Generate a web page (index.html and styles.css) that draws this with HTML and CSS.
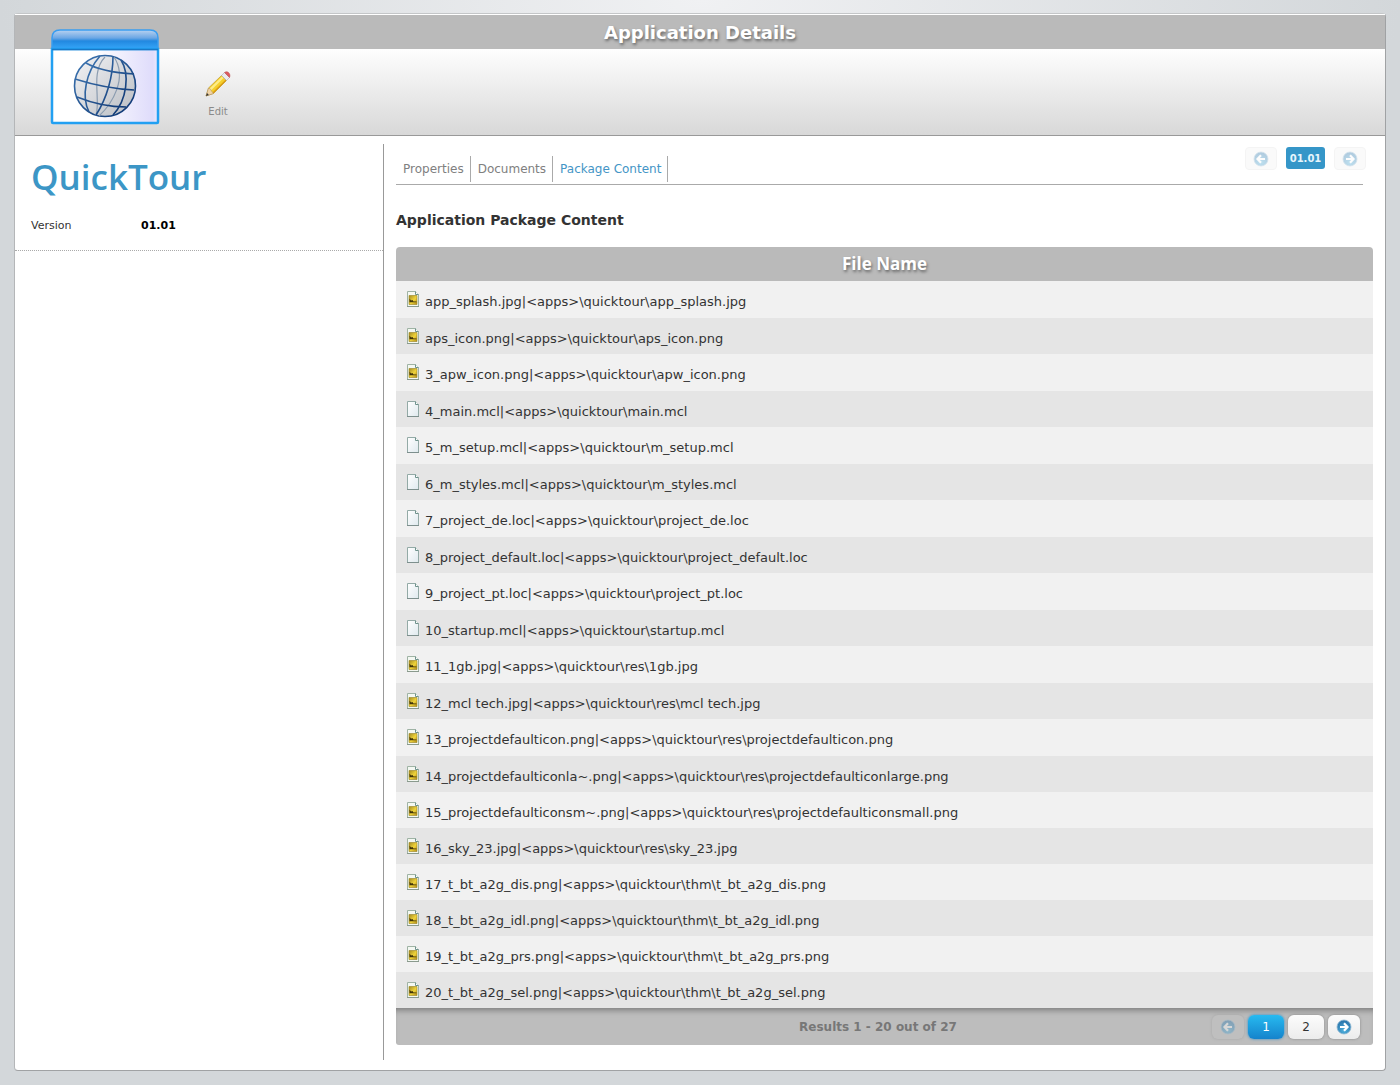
FILE: index.html
```html
<!DOCTYPE html>
<html lang="en">
<head>
    <meta charset="UTF-8">
    <meta name="viewport" content="width=device-width, initial-scale=1.0">
    <title>Application Details</title>
    <link rel="stylesheet" href="styles.css">
</head>
<body>
    <!-- shared icons -->
    <svg class="sprite" aria-hidden="true">
        <defs>
            <linearGradient id="sheet" x1="0" y1="0" x2="1" y2="1">
                <stop offset="0" stop-color="#ffffff"/>
                <stop offset="1" stop-color="#dfe9ee"/>
            </linearGradient>
            <linearGradient id="gold" x1="0" y1="0" x2="1" y2="1">
                <stop offset="0" stop-color="#a08a24"/>
                <stop offset="0.55" stop-color="#f0d43a"/>
                <stop offset="1" stop-color="#b08a14"/>
            </linearGradient>
            <radialGradient id="disc" cx="0.5" cy="0.75" r="0.7">
                <stop offset="0" stop-color="#4fb0dc"/>
                <stop offset="1" stop-color="#2a74ab"/>
            </radialGradient>
        </defs>
        <symbol id="file" viewBox="0 0 16 16">
            <path d="M2.5 0.5h8l3 3v12h-11z" fill="url(#sheet)" stroke="#93aaa6"/>
            <path d="M10.5 0.5v3h3" fill="#ffffff" stroke="#6f928c"/>
            <path d="M2 15.5h12" stroke="#7d8f8d"/>
        </symbol>
        <symbol id="image" viewBox="0 0 16 16">
            <path d="M2.5 0.5h8l3 3v12h-11z" fill="#f4f8f2" stroke="#9fb3a4"/>
            <path d="M10.5 0.5v3h3" fill="#ffffff" stroke="#6f928c"/>
            <path d="M4 4.500h8v9h-8z" fill="url(#gold)" stroke="#9a8320" stroke-width="0.6"/>
            <path d="M4.500 7.500l1.500 2 1.500-.5 1 1.500h3v.8h-7z" fill="#3e3208"/>
            <path d="M2 15.5h12" stroke="#8a9a8d"/>
        </symbol>
        <symbol id="left" viewBox="0 0 16 16">
            <circle cx="8" cy="8" r="7" fill="url(#disc)" stroke="#8fb9d3" stroke-width="0.8"/>
            <path d="M12 8H5M8 4.300L4.500 8L8 11.700" fill="none" stroke="#fff" stroke-width="2.200"/>
        </symbol>
        <symbol id="right" viewBox="0 0 16 16">
            <circle cx="8" cy="8" r="7" fill="url(#disc)" stroke="#8fb9d3" stroke-width="0.8"/>
            <path d="M4 8h7M8 4.300L11.500 8L8 11.700" fill="none" stroke="#fff" stroke-width="2.200"/>
        </symbol>
    </svg>

    <div class="panel">
        <header class="panel-header">
            <h1>Application Details</h1>
            <div class="toolbar">
                <button type="button" class="tool">
                    <svg width="28" height="28" viewBox="0 0 28 28">
                        <path d="M2 26l2.500-8L17.500 5.500l5 5L9.500 23.500z" fill="#f5cf2c" stroke="#b58f25" stroke-width="0.6"/>
                        <path d="M5.300 18.800L18 6.500l1.600 1.600L7 20.500z" fill="#fdec86"/>
                        <path d="M8.500 22.500L21.500 9.700l.9.900L9.500 23.400z" fill="#d99a14"/>
                        <path d="M2 26l2.500-8 2 1.200.9 1.700 2.100 2.600z" fill="#f0d3a6" stroke="#a98a5e" stroke-width="0.5"/>
                        <path d="M2 26l1-2.900 1.900 1.900z" fill="#333"/>
                        <path d="M17.500 5.500l3-3 5 5-3 3z" fill="#eaeaef" stroke="#9c9ca5" stroke-width="0.5"/>
                        <path d="M20.500 2.500c1.500-1.200 3-1 4.200.2 1.200 1.200 1.700 3 .8 4.800z" fill="#dd5a5e" stroke="#b7484c" stroke-width="0.5"/>
                    </svg>
                    <span>Edit</span>
                </button>
            </div>
            <svg class="app-icon" width="110" height="98" viewBox="0 0 110 98" role="img" aria-label="Web application">
                <defs>
                    <linearGradient id="bar" x1="0" y1="0" x2="0" y2="1">
                        <stop offset="0" stop-color="#b9d2f1"/>
                        <stop offset="0.4" stop-color="#6ba6e4"/>
                        <stop offset="0.55" stop-color="#2288e0"/>
                        <stop offset="1" stop-color="#38aafc"/>
                    </linearGradient>
                    <linearGradient id="pane" x1="0" y1="0" x2="1" y2="0">
                        <stop offset="0.4" stop-color="#ffffff"/>
                        <stop offset="0.95" stop-color="#dfdcfb"/>
                        <stop offset="1" stop-color="#ebe9fd"/>
                    </linearGradient>
                    <linearGradient id="globe" x1="0" y1="0" x2="1" y2="1">
                        <stop offset="0" stop-color="#f3f4f6"/>
                        <stop offset="1" stop-color="#b9bcc2"/>
                    </linearGradient>
                    <linearGradient id="wire" x1="0" y1="0" x2="1" y2="1">
                        <stop offset="0" stop-color="#3f78b4"/>
                        <stop offset="1" stop-color="#0c3370"/>
                    </linearGradient>
                </defs>
                <path d="M2 22V10q0-8 8-8h90q8 0 8 8v12z" fill="url(#bar)" stroke="#3a9df0" stroke-width="1.500"/>
                <path d="M2 21h106v73q0 1-1 1H3q-1 0-1-1z" fill="url(#pane)" stroke="#22a0f2" stroke-width="2.500"/>
                <path d="M2 21.500h106" stroke="#1878c8" stroke-width="1.500"/>
                <g fill="none" stroke="url(#wire)" stroke-width="1.600">
                    <circle cx="55" cy="58" r="30.500" fill="url(#globe)"/>
                    <g stroke="#8b9cb0" stroke-width="1.200">
                        <path d="M55 29C40 44 51 72 46 87M64 29C78 50 62 76 49 88"/>
                    </g>
                    <path d="M63 28.500C63 48 57 70 46 87M50 28C36 44 31 68 39 84M71 32C80 46 77 72 63 87"/>
                    <path d="M36 35C48 42 67 45 84 46M25 51C44 57 64 61 84 62M27 69C42 75 59 79 76 79"/>
                </g>
            </svg>
        </header>

        <div class="columns">
            <aside class="summary">
                <h2>QuickTour</h2>
                <dl>
                    <dt>Version</dt>
                    <dd>01.01</dd>
                </dl>
            </aside>

            <main class="content">
                <div class="content-top">
                    <nav class="tabs">
                        <a href="#properties">Properties</a>
                        <a href="#documents">Documents</a>
                        <a href="#package" class="active">Package Content</a>
                    </nav>
                    <div class="versions">
                        <button type="button" class="step" disabled aria-label="Previous version"><svg width="16" height="16"><use href="#left"/></svg></button>
                        <button type="button" class="version">01.01</button>
                        <button type="button" class="step" disabled aria-label="Next version"><svg width="16" height="16"><use href="#right"/></svg></button>
                    </div>
                </div>

                <h3>Application Package Content</h3>

                <table class="files">
                    <thead>
                        <tr><th>File Name</th></tr>
                    </thead>
                    <tbody>
                        <tr><td><svg><use href="#image"/></svg>app_splash.jpg|&lt;apps&gt;\quicktour\app_splash.jpg</td></tr>
                        <tr><td><svg><use href="#image"/></svg>aps_icon.png|&lt;apps&gt;\quicktour\aps_icon.png</td></tr>
                        <tr><td><svg><use href="#image"/></svg>3_apw_icon.png|&lt;apps&gt;\quicktour\apw_icon.png</td></tr>
                        <tr><td><svg><use href="#file"/></svg>4_main.mcl|&lt;apps&gt;\quicktour\main.mcl</td></tr>
                        <tr><td><svg><use href="#file"/></svg>5_m_setup.mcl|&lt;apps&gt;\quicktour\m_setup.mcl</td></tr>
                        <tr><td><svg><use href="#file"/></svg>6_m_styles.mcl|&lt;apps&gt;\quicktour\m_styles.mcl</td></tr>
                        <tr><td><svg><use href="#file"/></svg>7_project_de.loc|&lt;apps&gt;\quicktour\project_de.loc</td></tr>
                        <tr><td><svg><use href="#file"/></svg>8_project_default.loc|&lt;apps&gt;\quicktour\project_default.loc</td></tr>
                        <tr><td><svg><use href="#file"/></svg>9_project_pt.loc|&lt;apps&gt;\quicktour\project_pt.loc</td></tr>
                        <tr><td><svg><use href="#file"/></svg>10_startup.mcl|&lt;apps&gt;\quicktour\startup.mcl</td></tr>
                        <tr><td><svg><use href="#image"/></svg>11_1gb.jpg|&lt;apps&gt;\quicktour\res\1gb.jpg</td></tr>
                        <tr><td><svg><use href="#image"/></svg>12_mcl tech.jpg|&lt;apps&gt;\quicktour\res\mcl tech.jpg</td></tr>
                        <tr><td><svg><use href="#image"/></svg>13_projectdefaulticon.png|&lt;apps&gt;\quicktour\res\projectdefaulticon.png</td></tr>
                        <tr><td><svg><use href="#image"/></svg>14_projectdefaulticonla~.png|&lt;apps&gt;\quicktour\res\projectdefaulticonlarge.png</td></tr>
                        <tr><td><svg><use href="#image"/></svg>15_projectdefaulticonsm~.png|&lt;apps&gt;\quicktour\res\projectdefaulticonsmall.png</td></tr>
                        <tr><td><svg><use href="#image"/></svg>16_sky_23.jpg|&lt;apps&gt;\quicktour\res\sky_23.jpg</td></tr>
                        <tr><td><svg><use href="#image"/></svg>17_t_bt_a2g_dis.png|&lt;apps&gt;\quicktour\thm\t_bt_a2g_dis.png</td></tr>
                        <tr><td><svg><use href="#image"/></svg>18_t_bt_a2g_idl.png|&lt;apps&gt;\quicktour\thm\t_bt_a2g_idl.png</td></tr>
                        <tr><td><svg><use href="#image"/></svg>19_t_bt_a2g_prs.png|&lt;apps&gt;\quicktour\thm\t_bt_a2g_prs.png</td></tr>
                        <tr><td><svg><use href="#image"/></svg>20_t_bt_a2g_sel.png|&lt;apps&gt;\quicktour\thm\t_bt_a2g_sel.png</td></tr>
                    </tbody>
                </table>

                <div class="table-footer">
                    <span class="results">Results 1 - 20 out of 27</span>
                    <div class="pager">
                        <button type="button" class="arrow" disabled aria-label="Previous page"><svg width="16" height="16"><use href="#left"/></svg></button>
                        <button type="button" class="current">1</button>
                        <button type="button">2</button>
                        <button type="button" class="arrow" aria-label="Next page"><svg width="16" height="16"><use href="#right"/></svg></button>
                    </div>
                </div>
            </main>
        </div>
    </div>
</body>
</html>
```
FILE: styles.css
```css
* {
    box-sizing: border-box;
}

body {
    margin: 0;
    padding: 13px 14px 14px;
    font-family: Verdana, "DejaVu Sans", sans-serif;
    font-size: 13px;
    color: #333;
    background: #d3d7da radial-gradient(ellipse 700px 300px at 50% 0, #f0f1f3 0%, #d3d7da 100%) no-repeat;
}

button {
    font-family: inherit;
    border: none;
    padding: 0;
    cursor: pointer;
}

.sprite {
    position: absolute;
    width: 0;
    height: 0;
}

.panel {
    background: #fff;
    border: 1px solid #a0a2a4;
    border-top-color: #c4c6c8;
    border-left-color: #b4b6b8;
    border-radius: 4px;
}

/* header */
.panel-header {
    position: relative;
    border-top: 1px solid #fff;
    border-bottom: 1px solid #999;
}

h1 {
    height: 34px;
    margin: 0;
    font-size: 18px;
    line-height: 36px;
    text-align: center;
    color: #fff;
    background: #bababa;
    text-shadow: 1px 2px 3px #666;
}

.toolbar {
    height: 86px;
    padding: 21px 0 0 188px;
    background: linear-gradient(#fefefe, #d8d8d8);
}

.tool {
    display: flex;
    flex-direction: column;
    align-items: center;
    width: 30px;
    gap: 8px;
    font-size: 10px;
    line-height: 12px;
    color: #8a8a8a;
    background: none;
}

.app-icon {
    position: absolute;
    left: 35px;
    top: 13px;
}

/* left and right columns */
.columns {
    display: flex;
    padding: 8px 12px 10px 0;
}

.summary {
    width: 369px;
    flex-shrink: 0;
    border-right: 1px solid #999;
}

.summary h2 {
    margin: 0;
    padding: 9px 16px 0;
    font-family: "Trebuchet MS", "Open Sans", sans-serif;
    font-size: 35px;
    font-weight: 600;
    line-height: 48px;
    color: #3c96c6;
}

.summary dl {
    display: flex;
    margin: 0;
    padding: 17px 16px 16px;
    font-size: 11px;
    line-height: 16px;
    border-bottom: 1px dotted #aaa;
}

.summary dt {
    width: 110px;
}

.summary dd {
    margin: 0;
    font-weight: bold;
    color: #000;
}

.content {
    flex: 1;
    padding: 0 0 15px 12px;
}

.content-top {
    display: flex;
    justify-content: space-between;
    align-items: flex-start;
    height: 41px;
    margin-right: 10px;
    border-bottom: 1px solid #aaa;
}

.tabs {
    display: flex;
    margin-top: 12px;
}

.tabs a {
    padding: 0 6px 0 7px;
    font-size: 12px;
    line-height: 26px;
    color: #808080;
    text-decoration: none;
    border-right: 1px solid #aaa;
}

.tabs .active {
    color: #4495c6;
}

.versions {
    display: flex;
    gap: 9px;
    margin: 3px -3px 0 0;
}

.step {
    width: 32px;
    height: 23px;
    line-height: 0;
    border: 1px solid #eee;
    border-radius: 4px;
    background: #f8f8f8;
    opacity: 0.6;
}

.step svg {
    opacity: 0.6;
}

.version {
    width: 39px;
    height: 22px;
    font-size: 10px;
    font-weight: bold;
    color: #e6f5fc;
    background: #3596c8;
    border-radius: 3px;
}

h3 {
    margin: 25px 0 16px;
    font-size: 14px;
    line-height: 21px;
}

/* file list */
.files {
    width: 100%;
    border-collapse: collapse;
}

.files th {
    height: 34px;
    padding: 0;
    font-family: "Trebuchet MS", "Open Sans", sans-serif;
    font-size: 17px;
    font-weight: bold;
    line-height: 34px;
    color: #fff;
    background: #bababa;
    border-radius: 4px 4px 0 0;
    text-shadow: 1px 2px 3px #666;
}

.files td {
    height: 36px;
    padding: 10px 9px 0;
    line-height: 20px;
    vertical-align: top;
    background: #f1f1f1;
}

.files tr:nth-child(odd) td {
    height: 37px;
}

.files tr:nth-child(even) td {
    background: #e5e5e5;
}

.files tr:nth-child(n+15) td {
    height: 36px;
}

.files svg {
    width: 16px;
    height: 16px;
    margin-right: 4px;
    vertical-align: -1px;
}

.table-footer {
    display: grid;
    grid-template-columns: 1fr auto 1fr;
    align-items: center;
    height: 37px;
    padding-right: 13px;
    background: #bdbdbd;
    border-radius: 0 0 3px 3px;
    box-shadow: inset 0 6px 6px -4px #777;
}

.results {
    grid-column: 2;
    font-size: 12px;
    font-weight: bold;
    color: #777;
}

.pager {
    display: flex;
    justify-content: flex-end;
    gap: 4px;
}

.pager button {
    width: 36px;
    height: 24px;
    font-size: 12px;
    color: #333;
    background: linear-gradient(#fcfcfc, #ececec);
    border-radius: 6px;
    box-shadow: 0 0 3px #888;
}

.pager .current {
    color: #fff;
    background: linear-gradient(#27baf0, #1583cc);
    box-shadow: 0 0 3px #2a8cc8;
}

.pager .arrow {
    width: 32px;
    line-height: 0;
}

.pager .arrow:disabled {
    background: #c4c4c4;
    opacity: 0.4;
}
```
